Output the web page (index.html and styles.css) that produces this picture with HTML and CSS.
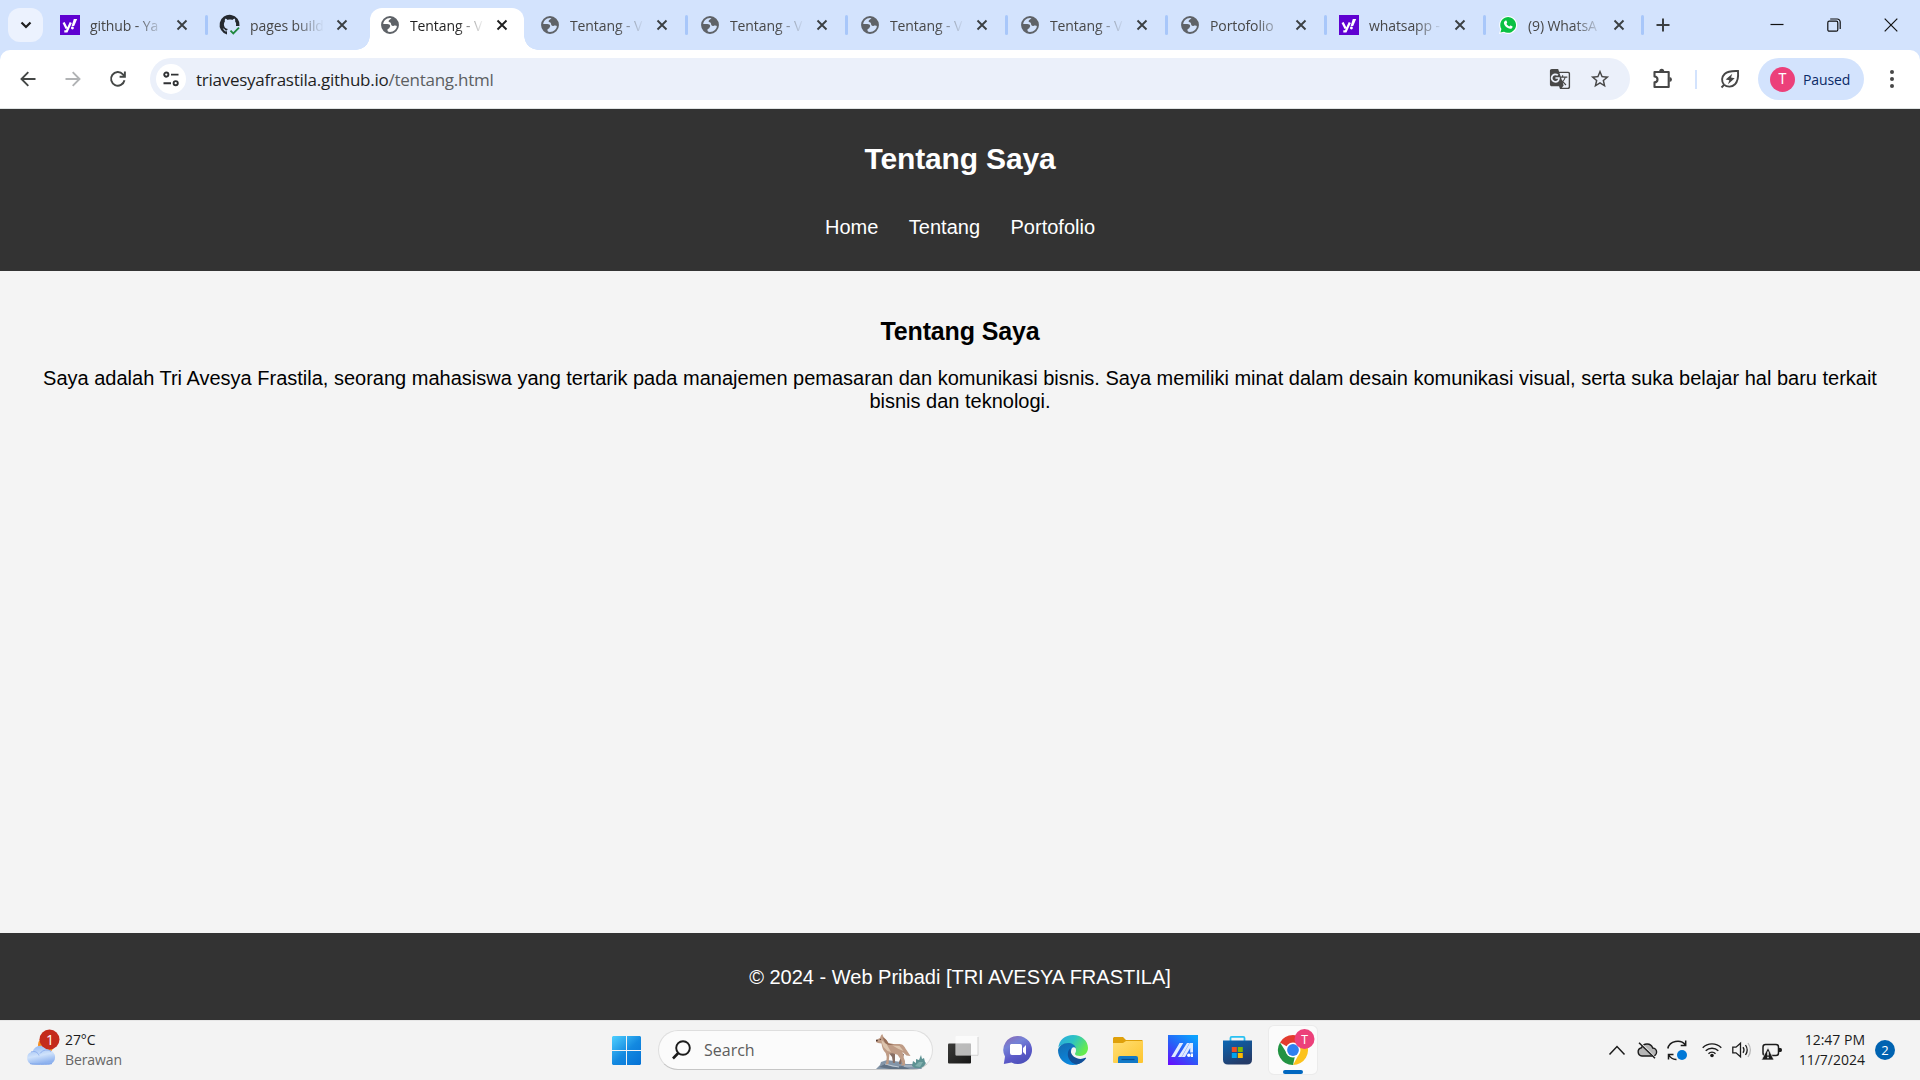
FILE: index.html
```html
<!DOCTYPE html>
<html lang="id">
<head>
<meta charset="utf-8">
<title>Tentang - Web Pribadi</title>
<link rel="stylesheet" href="styles.css">
</head>
<body>
<svg class="defs" width="0" height="0" aria-hidden="true">
  <symbol id="globe" viewBox="0 0 18 18">
    <circle cx="9" cy="9" r="8" fill="none" stroke="currentColor" stroke-width="1.9"/>
    <path fill="currentColor" d="M11 1.2C10.6 2.6 8 3.600 7.600 5.100C7.400 6.600 10 6 10 7.600C10 9.200 10.800 10.200 12.400 10C14 9.300 15 9.500 16.800 10.600A8 8 0 0 0 11 1.200zM1.200 8L6.300 8C8.600 8 9.700 9.300 9 10.700C8.300 11.500 8.700 12.200 7.200 12.800C5.800 13.400 6.600 15 7.500 16.800A8 8 0 0 1 1.200 8z"/>
  </symbol>
  <symbol id="close" viewBox="0 0 12 12"><path d="M1.500 1.500l9 9M10.500 1.500l-9 9" stroke="currentColor" stroke-width="1.900" fill="none"/></symbol>
  <symbol id="yahoo" viewBox="0 0 20 20">
    <path fill="#5f01d1" d="M0 0h20v20H0z"/>
    <path fill="none" stroke="#fff" stroke-width="2.300" d="M3.600 7.400l3 6.200M10.800 7.400L6.700 16.400H4.300"/>
    <path fill="#fff" d="M13.800 4h3.400l-3 7h-2.600z"/><circle cx="12.400" cy="13" r="1.450" fill="#fff"/>
  </symbol>
</svg>

<div class="tabstrip">
  <div class="tab-search"><svg width="12" height="8" viewBox="0 0 12 8"><path d="M1.500 1.500L6 6l4.500-4.500" fill="none" stroke="#1f1f1f" stroke-width="2.200"/></svg></div>
  <div class="tab"><svg class="fav big"><use href="#yahoo"/></svg><span class="label">github - Ya</span><svg class="x"><use href="#close"/></svg></div>
  <div class="tab plain">
    <svg class="fav big" viewBox="0 0 20 20"><path fill="#24292f" d="M7 19.500V16.300C5 16.700 4.300 15.800 3.700 14.800C3.400 14.200 3 14 2.600 13.600C3.900 13.300 4.600 14.300 5.100 14.900C5.700 15.600 6.400 15.500 7.100 15.200C7.200 14.600 7.500 14.200 7.900 13.900C5.200 13.500 3.900 12 3.900 9.200C3.900 8 4.300 7.200 4.900 6.500C4.700 5.700 4.700 4.700 5.100 3.800C6 3.800 7 4.400 7.700 4.900C9.200 4.500 10.800 4.500 12.300 4.900C13 4.400 14 3.800 14.900 3.800C15.300 4.700 15.300 5.700 15.100 6.500C15.700 7.200 16.100 8 16.100 9.200L16 11L19.500 11A10 10 0 1 0 7 19.500z"/><path d="M10.500 15.600l2.800 2.800 5.700-5.800" fill="none" stroke="#1f883d" stroke-width="1.800"/></svg>
    <span class="label">pages build</span><svg class="x"><use href="#close"/></svg></div>
  <div class="tab active"><svg class="fav"><use href="#globe"/></svg><span class="label">Tentang - V</span><svg class="x"><use href="#close"/></svg></div>
  <div class="tab"><svg class="fav"><use href="#globe"/></svg><span class="label">Tentang - V</span><svg class="x"><use href="#close"/></svg></div>
  <div class="tab"><svg class="fav"><use href="#globe"/></svg><span class="label">Tentang - V</span><svg class="x"><use href="#close"/></svg></div>
  <div class="tab"><svg class="fav"><use href="#globe"/></svg><span class="label">Tentang - V</span><svg class="x"><use href="#close"/></svg></div>
  <div class="tab"><svg class="fav"><use href="#globe"/></svg><span class="label">Tentang - V</span><svg class="x"><use href="#close"/></svg></div>
  <div class="tab narrow"><svg class="fav"><use href="#globe"/></svg><span class="label">Portofolio</span><svg class="x"><use href="#close"/></svg></div>
  <div class="tab narrow"><svg class="fav big"><use href="#yahoo"/></svg><span class="label">whatsapp -</span><svg class="x"><use href="#close"/></svg></div>
  <div class="tab last">
    <svg class="fav" viewBox="0 0 18 18"><path fill="#fff" d="M0 18l1.300-4.600A9 9 0 1 1 4.600 16.800z"/><path fill="#0ac143" d="M1.400 16.600l1-3.500A7.900 7.900 0 1 1 5 15.700z"/><path fill="#fff" d="M6.300 4.700c.4-.4 1-.3 1.200.1l.7 1.600c.1.500-.5 1-.8 1.400c.7 1.300 1.700 2.100 3 2.600c.4-.4.800-1.100 1.200-1l1.700.9c.5.300.1 1.400-.4 1.900c-1 .9-2.500.7-4-.100C7 11.100 5.500 9.400 5 7.700c-.3-1.200.3-2.400 1.300-3z"/></svg>
    <span class="label">(9) WhatsA</span><svg class="x"><use href="#close"/></svg></div>
  <svg class="new-tab" width="14" height="14" viewBox="0 0 14 14"><path d="M7 .5v13M.5 7h13" stroke="#3c4043" stroke-width="2"/></svg>
  <div class="window-controls">
    <svg width="14" height="14" viewBox="0 0 14 14"><path d="M.5 6.500h13" stroke="#111" stroke-width="1.200"/></svg>
    <svg width="14" height="14" viewBox="0 0 14 14"><rect x=".8" y="3.200" width="10" height="10" rx="1.500" fill="none" stroke="#111" stroke-width="1.200"/><path d="M3.200 1h7a3 3 0 0 1 3 3v7" fill="none" stroke="#111" stroke-width="1.200"/></svg>
    <svg width="14" height="14" viewBox="0 0 14 14"><path d="M.7.7l12.600 12.600M13.300.7L.7 13.300" stroke="#111" stroke-width="1.200"/></svg>
  </div>
</div>

<div class="toolbar-wrap">
<div class="toolbar">
  <div class="nav-buttons">
    <svg width="16" height="16" viewBox="0 0 16 16" fill="none" stroke="#444746" stroke-width="1.900"><path d="M15.500 8H1.800M8.300 1.200L1.500 8l6.800 6.800"/></svg>
    <svg width="16" height="16" viewBox="0 0 16 16" fill="none" stroke="#b1b3b5" stroke-width="1.900"><path d="M.5 8h13.700M7.700 1.200L14.500 8l-6.800 6.800"/></svg>
    <svg width="16" height="16" viewBox="0 0 16 16" fill="none" stroke="#444746" stroke-width="1.900"><path d="M14.500 9.300A6.800 6.800 0 1 1 12.900 3.300L14.600 5.200M14.900.5v5.200H9.600"/></svg>
  </div>
  <div class="omnibox">
    <div class="site-info"><svg width="16" height="16" viewBox="0 0 16 16" fill="none" stroke="#303234" stroke-width="1.900"><circle cx="3.300" cy="3.600" r="2.100"/><path d="M8 3.600h7.500M.5 12.200H8"/><circle cx="12.700" cy="12.200" r="2.100"/></svg></div>
    <span class="url">triavesyafrastila.github.io<span class="path">/tentang.html</span></span>
    <svg class="act" width="22" height="22" viewBox="0 0 24 24" fill="#474747"><path d="M21 4H11l-1-3H3c-1.100 0-2 .9-2 2v15c0 1.100.9 2 2 2h8l1 3h9c1.100 0 2-.9 2-2V6c0-1.100-.9-2-2-2zM7 16c-2.760 0-5-2.240-5-5s2.240-5 5-5c1.350 0 2.480.5 3.350 1.300L9.030 8.570c-.38-.36-1.040-.78-2.030-.78-1.740 0-3.150 1.440-3.150 3.210S5.260 14.210 7 14.210c2.010 0 2.840-1.440 2.920-2.410H7v-1.710h4.680c.07.31.12.61.12 1.020C11.800 13.970 9.890 16 7 16zm6.170-5.420h3.700c-.43 1.250-1.110 2.430-2.050 3.470-.31-.35-.6-.72-.86-1.100l-.79-2.370zm8.330 9.920c0 .55-.45 1-1 1H14l2-2.500-1.040-3.100 3.100 3.100.92-.92-3.300-3.250.02-.02c1.130-1.250 1.930-2.690 2.400-4.220H20v-1.300h-4.530V8h-1.290v1.290h-1.440L11.460 5.500h9.040c.55 0 1 .45 1 1v14z"/></svg>
    <svg class="act" width="22" height="22" viewBox="0 0 24 24" fill="#474747"><path d="M22 9.240l-7.190-.62L12 2 9.190 8.630 2 9.240l5.460 4.730L5.820 21 12 17.270 18.180 21l-1.630-7.030L22 9.240zM12 15.400l-3.760 2.270 1-4.280-3.320-2.880 4.380-.38L12 6.100l1.710 4.040 4.380.38-3.320 2.880 1 4.280L12 15.400z"/></svg>
  </div>
  <svg class="ext" width="22" height="22" viewBox="0 0 22 22"><path d="M2.500 4h14.200v15H2.500v-4.600c4-.3 4-5.600 0-5.900z" fill="none" stroke="#474747" stroke-width="2.100" stroke-linejoin="round"/><path d="M7.200 3.200a2.500 2.500 0 0 1 5 0zM17.500 9a2.500 2.500 0 0 1 0 5z" fill="#474747"/></svg>
  <span class="divider"></span>
  <svg class="leaf" width="20" height="20" viewBox="0 0 20 20" fill="none" stroke="#474747"><path stroke-width="1.900" d="M1.500 18.500l3-3.200M3.900 15.600C1.200 12.300 1.600 7.900 4.600 5C7.500 2.300 12 1.700 18 2c.5 6-.2 10.400-3 13.300c-3 2.900-7.800 3.200-11.100.3z"/><path fill="#474747" stroke="none" d="M12.300 4.800L5.700 10.600l3.600.7-1.300 3.900 6.700-5.900-3.700-.7z"/></svg>
  <div class="profile"><span class="avatar">T</span><span class="paused">Paused</span></div>
  <svg class="menu" width="6" height="20" viewBox="0 0 6 20" fill="#474747"><circle cx="3" cy="3" r="2"/><circle cx="3" cy="10" r="2"/><circle cx="3" cy="17" r="2"/></svg>
</div>
</div>

<div class="page">
  <header class="site-header">
    <h1>Tentang Saya</h1>
    <nav><a>Home</a><a>Tentang</a><a>Portofolio</a></nav>
  </header>
  <main>
    <h2>Tentang Saya</h2>
    <p>Saya adalah Tri Avesya Frastila, seorang mahasiswa yang tertarik pada manajemen pemasaran dan komunikasi bisnis. Saya memiliki minat dalam desain komunikasi visual, serta suka belajar hal baru terkait bisnis dan teknologi.</p>
  </main>
  <footer class="site-footer"><p>© 2024 - Web Pribadi [TRI AVESYA FRASTILA]</p></footer>
</div>

<div class="taskbar">
  <div class="weather">
    <svg width="36" height="38" viewBox="0 0 36 38">
      <defs><linearGradient id="cl" x1="0" y1="0" x2=".3" y2="1"><stop offset="0" stop-color="#8db4f2"/><stop offset=".6" stop-color="#cfe2fb"/><stop offset="1" stop-color="#8fb3ef"/></linearGradient></defs>
      <circle cx="20" cy="14" r="8" fill="#f58b1d"/>
      <path d="M6.500 33.500a6.500 6.500 0 0 1 0-12.800a9.200 9.200 0 0 1 16.500-1.600a7.300 7.300 0 0 1 0 14.400z" fill="url(#cl)"/>
      <path d="M4 32.600c2 .9 19 .9 22 0" stroke="#7fa6ea" fill="none"/><path d="M5 21c4-1.500 7 .5 8 3.500M14 22.500c3-4 8-4.500 11-2" stroke="#8eb0ee" fill="none"/>
      <circle cx="23.500" cy="8.500" r="10" fill="#c42b1c"/><text x="24" y="13.500" text-anchor="middle" class="badge-text">1</text>
    </svg>
    <div class="weather-text"><span>27°C</span><span class="muted">Berawan</span></div>
  </div>
  <svg class="start" width="29" height="29" viewBox="0 0 29 29"><defs><linearGradient id="win" gradientUnits="userSpaceOnUse" x1="0" y1="0" x2="26" y2="29"><stop offset="0" stop-color="#4fd0ff"/><stop offset=".55" stop-color="#1389e0"/><stop offset="1" stop-color="#0673d6"/></linearGradient></defs><path fill="url(#win)" d="M1 0h13v14H0V1zM15 0h13l1 1v13H15zM0 15h14v14H1l-1-1zM15 15h14v13l-1 1H15z"/></svg>
  <div class="search">
    <svg width="19" height="20" viewBox="0 0 19 20" fill="none" stroke="#1b1b1b"><circle cx="11" cy="8" r="6.800" stroke-width="1.900"/><path d="M6.300 13L1 18.500" stroke-width="2.600"/></svg>
    <span>Search</span>
    <svg class="wolf" width="50" height="35" viewBox="0 0 50 35">
      <path d="M0 35l4-4 1-3 6-2 14 2 5 2 8 0 6 2 2 3z" fill="#8395a8"/><path d="M3 33l6-3 8 3 9-1 8 3H14z" fill="#607285"/><path d="M9 30l8 2 6 1M28 32l10 0" stroke="#c0cbd5" fill="none"/>
      <path d="M36 32l1-5 3 2 0-4 3 1 2-5 1 4 2-1 1 4 1 1-2 3-3 2-6 0z" fill="#5d9293"/><path d="M39 32l4-4 4 0-3 5z" fill="#81b0ae"/>
      <path d="M23 19l2 4-2 5 0 2h2l2-6 1-4zM12 18l4 5 1 6h2v-7l0-4z" fill="#876e64"/>
      <path d="M0 6l4-2 1-2.500 1.200-1.500L7.500 3l2 2 3 4 5 1 6 0c4 0 5 3 7 6l4 6-4-.5-4-3.500 1 5 1.500 4 0 4.500-3.500 0-.5-1 1.500-.7-1.500-4-3.500-5-5-1.500-3 .2-.5 5-.5 5.500-3 .5.700-1.500.5-6-1-4C7.500 17 6 14 5.500 9.500L2 9 0 8z" fill="#bf9c86"/>
      <path d="M5.500 6l5 4 4.500 8-3.500-1-4-4-1.500-4zM16.500 11.500l7 .5 4 5-5-2z" fill="#dcc4ad"/><path d="M6.500 3l4 3 2 3.500 6 1.500-6 0-3.500-2z" fill="#956e58"/><circle cx="4.300" cy="5.300" r=".6" fill="#422d25"/><path d="M0 5.700h1.700v1.500H0z" fill="#4c3630"/>
    </svg>
  </div>
  <div class="apps">
    <svg width="30" height="30" viewBox="0 0 30 30"><defs><linearGradient id="tv" x2="1" y2="1"><stop offset="0" stop-color="#3b3b39"/><stop offset="1" stop-color="#171717"/></linearGradient></defs><rect y="8.500" width="23" height="20" rx="1" fill="url(#tv)"/><rect x="7.500" y="1" width="22.500" height="19.500" rx="1" fill="#fff" fill-opacity=".68"/><path d="M23 20.300h7V2" fill="none" stroke="#d2d2d2"/><path d="M7.500 8.500H23v12H7.500z" fill="#bbb" fill-opacity=".5"/></svg>
    <svg width="30" height="30" viewBox="0 0 30 30"><defs><linearGradient id="chat" x1=".2" y1="0" x2=".7" y2="1"><stop offset="0" stop-color="#896bb8"/><stop offset=".3" stop-color="#7482d7"/><stop offset=".65" stop-color="#5d5bc9"/><stop offset="1" stop-color="#4a4eb8"/></linearGradient></defs><path d="M15 1a14 14 0 1 1-6.500 26.400L.8 29 2 21.600A14 14 0 0 1 15 1z" fill="url(#chat)"/><path d="M8 9h9q2 0 2 2v7q0 2-2 2H9q-2 0-2-2v-8zM20 13l3-3v10l-3-3z" fill="#fff"/></svg>
    <svg width="30" height="30" viewBox="0 0 30 30"><defs><linearGradient id="e1" x1="0" y1="0" x2="1" y2=".5"><stop offset="0" stop-color="#2ba7e4"/><stop offset=".5" stop-color="#2dc3c3"/><stop offset="1" stop-color="#66eb4e"/></linearGradient><linearGradient id="e2" x2=".5" y2="1"><stop offset="0" stop-color="#146baf"/><stop offset="1" stop-color="#0a88e0"/></linearGradient></defs><path d="M.3 13C1 5 7 0 15 0c9 0 15 6 15 13 0 5-4 8-8 8-3 0-5-1-5-2 0-1 1-1 1-4 0-3-3-6-8-6C5 9 1 11 .3 13z" fill="url(#e1)"/><path d="M0 15C1 11 5 8 10 8c4 0 7 2 8 5-3-2-5 0-5 4 0 6 5 10 11 10-3 2-6 3-9 3C6 30 0 23 0 15z" fill="url(#e2)"/><path d="M12.500 13c-6 6-1 15 6 16.500 4-.7 7-2.500 9.500-6 .3-.7 0-1-.7-.7C21 26 13.500 22 12.500 16z" fill="#114f98"/></svg>
    <svg width="30" height="30" viewBox="0 0 30 30"><defs><linearGradient id="fo" x2="1" y2="1"><stop offset="0" stop-color="#ffde75"/><stop offset="1" stop-color="#fec52d"/></linearGradient></defs><path d="M0 3l1-1h9l3 3h16l1 1v4H0z" fill="#dfa00a"/><path d="M0 8h10l3-2h17v21q0 1-1 1H1q-1 0-1-1z" fill="url(#fo)"/><path d="M5 28v-5q0-2 2-2h16q2 0 2 2v5z" fill="#1279c7"/><path d="M8.500 24.500h13" stroke="#064d91" stroke-width="1.200"/></svg>
    <svg width="30" height="30" viewBox="0 0 30 30"><defs><linearGradient id="ma" x1=".8" y1="0" x2=".1" y2="1"><stop offset="0" stop-color="#0ca2fe"/><stop offset=".5" stop-color="#295ef7"/><stop offset="1" stop-color="#650ffd"/></linearGradient></defs><path fill="url(#ma)" d="M0 0h30v30H0z"/><path fill="#dfeaff" d="M11.500 8h3.800L7 22H3.200zM19 8h2.500L13.500 22H10zM21.800 8H25v9.500h-2.800v-4.500L17 22h-3.200z"/><circle cx="20.800" cy="20.300" r="1.700" fill="#fff"/><path fill="#fff" d="M22.800 18.500H25V22h-2.200z"/></svg>
    <svg width="30" height="30" viewBox="0 0 30 30"><defs><linearGradient id="st" x2=".5" y2="1"><stop offset="0" stop-color="#0a67b5"/><stop offset="1" stop-color="#243b68"/></linearGradient></defs><path d="M7.500 6V3q0-1.200 1.200-1.200h11.600Q21.500 1.800 21.500 3v3" fill="none" stroke="#29c1f2" stroke-width="1.800"/><path d="M0 5.500h29v19q0 5-5 5H5q-5 0-5-5z" fill="url(#st)"/><path fill="#f25022" d="M8.800 12h5v5h-5z"/><path fill="#7fba00" d="M14.800 12h5v5h-5z"/><path fill="#00a4ef" d="M8.800 18h5v5h-5z"/><path fill="#ffb900" d="M14.800 18h5v5h-5z"/></svg>
  </div>
  <div class="chrome-tile">
    <svg width="48" height="48" viewBox="0 0 48 48"><path d="M24 24L11 16.500A15 15 0 0 1 37 16.500z" fill="#e33b2e"/><path d="M24 17h13.300a15 15 0 0 1-13.300 22l6-11z" fill="#fcc31e"/><path d="M11 16.500l7 11 7.800 3.200L24 39A15 15 0 0 1 11 16.500z" fill="#229342"/><circle cx="24" cy="24" r="7.500" fill="#fff"/><circle cx="24" cy="24" r="5.900" fill="#2f7ff0"/><circle cx="35.500" cy="13" r="10" fill="#ec407a"/><text x="35.500" y="17.500" text-anchor="middle" class="badge-letter">T</text><rect x="14" y="44" width="20" height="4" rx="2" fill="#0067c0"/></svg>
  </div>
  <div class="tray">
    <svg width="16" height="20" viewBox="0 0 16 20"><path d="M.5 14.500L8 6.500l7.500 8" fill="none" stroke="#1b1b1b" stroke-width="1.500"/></svg>
    <svg width="20" height="20" viewBox="0 0 20 20"><path d="M5 16a4.200 4.200 0 0 1-.5-8.300A6 6 0 0 1 15.700 8 4 4 0 0 1 15.500 16z" fill="#b6b6b6" stroke="#1b1b1b" stroke-width="1.400"/><path d="M2.500 2.200L18 17.600" stroke="#f3f3f3" stroke-width="2"/><path d="M2 2.800l16 15.500" stroke="#1b1b1b" stroke-width="1.500"/></svg>
    <svg width="20" height="20" viewBox="0 0 20 20"><path d="M.8 8.500C2.500 1 13.500-1.500 18.500 5M18.700.5V5.500h-5M1.500 19.500V14.500h5M1.800 15C4 19 7 19.500 9.500 19.400" fill="none" stroke="#1b1b1b" stroke-width="1.500"/><circle cx="15" cy="15" r="5" fill="#0078d7"/></svg>
    <svg class="wifi" width="20" height="20" viewBox="0 0 20 20"><path d="M.7 7.700a13.300 13.300 0 0 1 18.600 0M3.700 10.800a9 9 0 0 1 12.600 0M6.500 13.700a5 5 0 0 1 7 0" fill="none" stroke="#1b1b1b" stroke-width="1.400"/><circle cx="10" cy="15.500" r="1.800" fill="#1b1b1b"/></svg>
    <svg width="20" height="20" viewBox="0 0 20 20" fill="none" stroke="#1b1b1b" stroke-width="1.300"><path d="M.8 7.200H4L8.500 3.200v13.600L4 12.800H.8zM11 7.200q2 2.800 0 5.600M13.500 5q3.400 5 0 10"/><path d="M16 3q4.800 7 0 14" stroke="#b9b9b9"/></svg>
    <svg width="20" height="20" viewBox="0 0 20 20"><rect x="1" y="4.500" width="15.500" height="11" rx="2.500" fill="none" stroke="#1b1b1b" stroke-width="1.500"/><path d="M17 8h1.500q1.500 0 1.500 2t-1.500 2H17z" fill="#1b1b1b"/><path d="M6 7.500L12 20H-.5z" fill="#1b1b1b" stroke="#f3f3f3" stroke-width=".7"/><path d="M6 11.500v4M6 16.800v1.400" stroke="#fff" stroke-width="1.400"/></svg>
  </div>
  <div class="clock"><span>12:47 PM</span><span>11/7/2024</span></div>
  <span class="count">2</span>
</div>
</body>
</html>
```
FILE: styles.css
```css
* { box-sizing: border-box; }
body {
  margin: 0;
  width: 1920px;
  height: 1080px;
  display: flex;
  flex-direction: column;
  overflow: hidden;
  background: #f4f4f4;
  font-family: "Open Sans", "Noto Sans", sans-serif;
}
svg { display: block; flex: none; overflow: visible; }
.defs { position: absolute; }

/* Tab strip */
.tabstrip {
  flex: none;
  height: 50px;
  display: flex;
  background: #d3e3fd;
}
.tab-search {
  width: 35px;
  height: 34px;
  margin: 8px 3px 0 8px;
  border-radius: 12px;
  background: #ecf2fe;
  display: flex;
  align-items: center;
  justify-content: center;
}
.tab {
  flex: none;
  position: relative;
  width: 160px;
  height: 34px;
  margin-top: 8px;
  padding-left: 14px;
  display: flex;
  align-items: center;
  color: #474747;
}
.tab.narrow { width: 159px; }
.tab.last { width: 158px; }
.tab::after {
  content: "";
  position: absolute;
  right: -2px;
  top: 7px;
  width: 3px;
  height: 20px;
  border-radius: 2px;
  background: #a8c7fa;
}
.tab.plain::after { display: none; }
.fav { width: 18px; height: 18px; margin: 0 11px 0 1px; color: #5f6368; }
.fav.big { width: 20px; height: 20px; margin: 0 10px 0 0; }
.label {
  width: 84px;
  height: 26px;
  padding-top: 1px;
  white-space: nowrap;
  font-size: 14px;
  line-height: 25px;
  letter-spacing: -0.1px;
  -webkit-mask-image: linear-gradient(90deg, #000 46px, transparent 74px);
  mask-image: linear-gradient(90deg, #000 46px, transparent 74px);
}
.x { width: 12px; height: 12px; margin-left: 2px; color: #3c4043; }
.narrow .x, .last .x { margin-left: 1px; }
.tab.active {
  width: 154px;
  height: 42px;
  margin: 8px 2px 0 4px;
  padding: 0 0 8px 10px;
  background: #fff;
  border-radius: 12px 12px 0 0;
  color: #1f1f1f;
}
.tab.active .x { color: #1f1f1f; }
.tab.active::before, .tab.active::after {
  content: "";
  position: absolute;
  top: auto;
  bottom: 0;
  width: 14px;
  height: 14px;
  border-radius: 0;
}
.tab.active::before { left: -14px; background: radial-gradient(circle at 0 0, transparent 13.5px, #fff 14px); }
.tab.active::after { right: -14px; background: radial-gradient(circle at 100% 0, transparent 13.5px, #fff 14px); }
.new-tab { margin: 18px 0 0 14px; }
.window-controls { margin: 18px 22px 0 auto; display: flex; gap: 43px; }

/* Toolbar */
.toolbar-wrap { flex: none; background: #d3e3fd; }
.toolbar {
  height: 59px;
  display: flex;
  align-items: center;
  padding: 0 25px 0 20px;
  border-bottom: 1px solid #dfe3e3;
  border-radius: 10px 10px 0 0;
  background: #fff;
}
.nav-buttons { display: flex; gap: 29px; width: 130px; }
.omnibox {
  width: 1480px;
  height: 42px;
  display: flex;
  align-items: center;
  padding: 0 19px 0 6px;
  border-radius: 21px;
  background: #ebf0fa;
}
.site-info {
  width: 30px;
  height: 30px;
  display: flex;
  align-items: center;
  justify-content: center;
  border-radius: 50%;
  background: #fff;
}
.url {
  margin: 0 auto 0 10px;
  padding-top: 1px;
  font-size: 17px;
  line-height: 26px;
  letter-spacing: -0.26px;
  color: #1f1f1f;
}
.path { color: #5c5f62; }
.act + .act { margin-left: 18px; }
.ext { margin-left: 22px; }
.divider { width: 2px; height: 19px; margin: 0 23px 0 21px; background: #d3e3fd; }
.profile {
  width: 106px;
  height: 42px;
  margin: 0 25px 0 18px;
  padding-left: 12px;
  display: flex;
  align-items: center;
  border-radius: 21px;
  background: #d3e3fd;
}
.avatar {
  width: 25px;
  height: 25px;
  margin-right: 8px;
  border-radius: 50%;
  background: #ec407a;
  color: #fff;
  font: 14px/25px Roboto, sans-serif;
  text-align: center;
}
.paused { font-size: 14px; letter-spacing: -0.1px; color: #0b2a66; }

/* Web page */
.page {
  flex: 1;
  display: flex;
  flex-direction: column;
  font: 20px/23px "Liberation Sans", Arial, sans-serif;
  text-align: center;
}
.site-header { height: 162px; padding-top: 33px; background: #333; color: #fff; }
.site-header h1 { margin: 0 0 40px; font-size: 30px; line-height: 34px; letter-spacing: -0.15px; }
.site-header nav { display: flex; justify-content: center; gap: 30.500px; }
main { flex: 1; padding: 46px 25px 0; color: #000; }
main h2 { margin: 0 0 21px; font-size: 25px; line-height: 29px; letter-spacing: -0.15px; }
main p { margin: 0; }
.site-footer { height: 87px; padding-top: 33px; background: #333; color: #fff; }
.site-footer p { margin: 0; }

/* Taskbar */
.taskbar {
  flex: none;
  height: 60px;
  display: flex;
  align-items: center;
  padding: 0 0 1px 26px;
  border-top: 1px solid #e6e6e6;
  background: #f3f3f3;
}
.weather { width: 586px; display: flex; align-items: center; gap: 3px; }
.weather-text { display: flex; flex-direction: column; font-size: 14px; line-height: 20px; letter-spacing: -0.1px; color: #1b1b1b; }
.muted { color: #666; }
.badge-text { font: 14px "Open Sans", sans-serif; fill: #fff; }
.badge-letter { font: 12px Roboto, sans-serif; fill: #fff; }
.search {
  width: 275px;
  height: 40px;
  margin-left: 17px;
  padding: 0 6px 0 13px;
  display: flex;
  align-items: center;
  border: 1px solid #dedede;
  border-bottom-color: #c6c6c6;
  border-radius: 20px;
  background: #fbfbfb;
  font-size: 16px;
  color: #5d5d5d;
}
.search span { margin: 0 auto 0 13px; }
.wolf { margin-top: 2px; }
.apps { display: flex; gap: 25px; margin-left: 15px; }
.chrome-tile {
  margin-left: 16px;
  border-radius: 5px;
  background: #fbfbfb;
  box-shadow: 0 0 0 1px #ebebeb;
}
.tray { display: flex; gap: 10px; margin-left: 292px; }
.tray svg:nth-child(2) { margin-left: 2px; }
.tray .wifi { margin-left: 5px; }
.clock {
  width: 83px;
  display: flex;
  flex-direction: column;
  align-items: flex-end;
  font-size: 14px;
  line-height: 20px;
  color: #1b1b1b;
}
.count {
  width: 20px;
  height: 20px;
  margin-left: 10px;
  border-radius: 50%;
  background: #0063b1;
  color: #fff;
  font-size: 13px;
  line-height: 20px;
  text-align: center;
}
```
